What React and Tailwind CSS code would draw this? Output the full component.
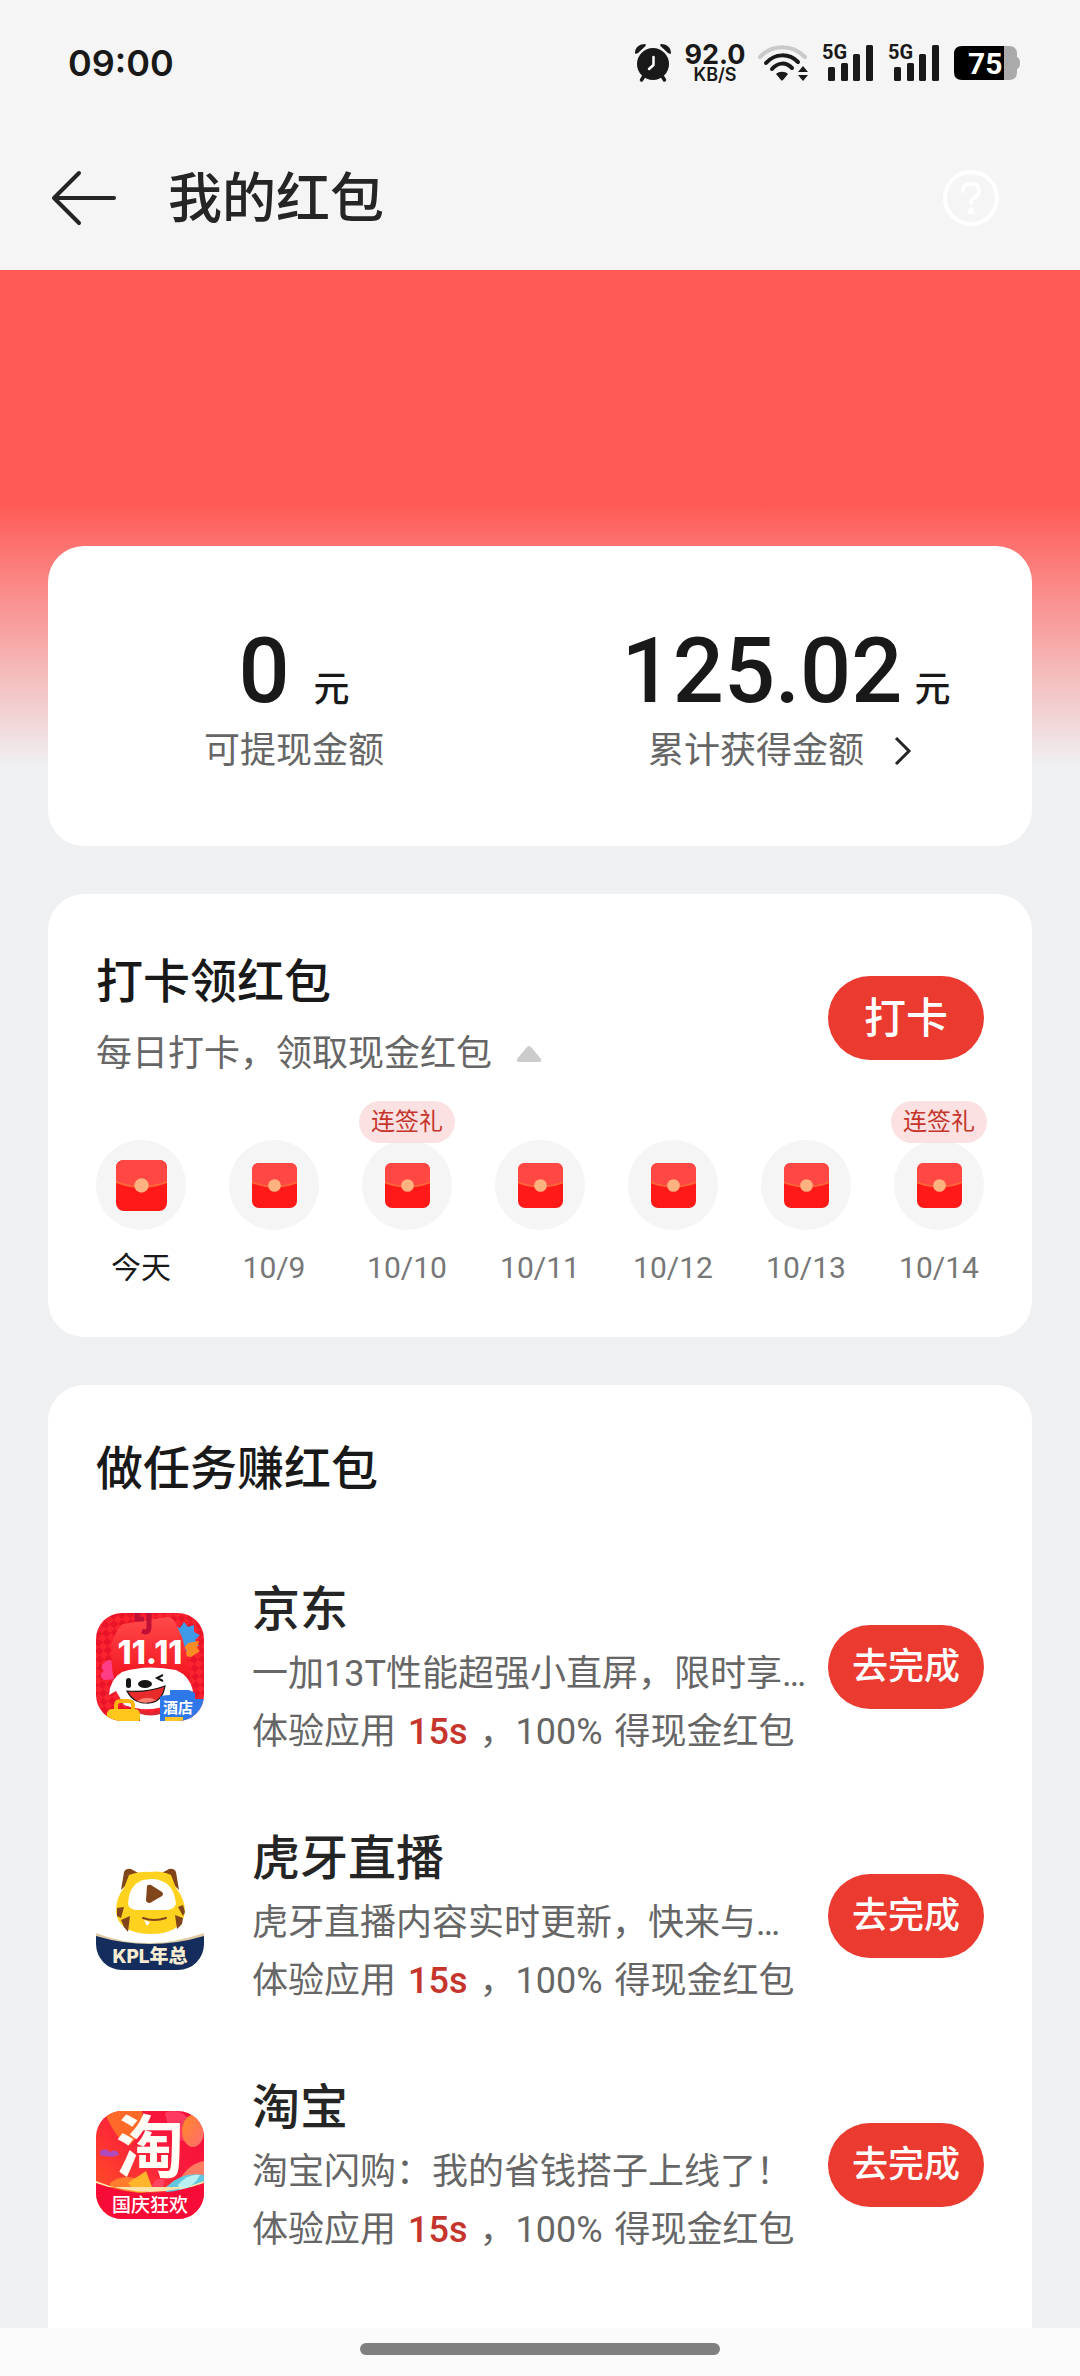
import React from "react";

const DAYS = [
  { label: "今天", today: true },
  { label: "10/9" },
  { label: "10/10", gift: true },
  { label: "10/11" },
  { label: "10/12" },
  { label: "10/13" },
  { label: "10/14", gift: true },
];

const TASKS = [
  { name: "京东", desc: "一加13T性能超强小直屏，限时享…", Icon: JdIcon },
  { name: "虎牙直播", desc: "虎牙直播内容实时更新，快来与…", Icon: HuyaIcon },
  { name: "淘宝", desc: "淘宝闪购：我的省钱搭子上线了！", Icon: TaobaoIcon },
];

function AlarmIcon() {
  return (
    <svg width="38" height="40" viewBox="0 0 38 40" aria-hidden="true">
      <path d="M1 10C1 4 6 1 11 1C12 1 12 3 11 3.500L4 10C3 11 1 11 1 10Z" fill="#191919" />
      <path d="M37 10C37 4 32 1 27 1C26 1 26 3 27 3.500L34 10C35 11 37 11 37 10Z" fill="#191919" />
      <path d="M10 33L7.500 37M28 33L30.500 37" stroke="#191919" strokeWidth="3.500" strokeLinecap="round" />
      <circle cx="19" cy="21" r="16" fill="#191919" />
      <path d="M19.500 14V22L15 26" stroke="#fff" strokeWidth="2.500" fill="none" strokeLinecap="round" strokeLinejoin="round" />
    </svg>
  );
}

function WifiIcon() {
  return (
    <svg width="50" height="38" viewBox="0 0 50 38" fill="none" aria-hidden="true">
      <path d="M2 13C14 0 34 0 47 13" stroke="#c9c9c9" strokeWidth="4" strokeLinecap="round" />
      <path d="M8 19C17 9 31 9 40 18" stroke="#191919" strokeWidth="4" strokeLinecap="round" />
      <path d="M14 25C20 18 28 18 34 24" stroke="#191919" strokeWidth="4" strokeLinecap="round" />
      <path d="M18 30C21 27 27 27 30 30L25 36Q24 37 23 36Z" fill="#191919" />
      <path d="M45 22L50 28H40ZM45 37L50 31H40Z" fill="#191919" />
    </svg>
  );
}

function Signal() {
  return (
    <div className="relative h-[38px] w-[52px]">
      <span className="absolute top-0 left-0 text-xl leading-4 font-bold">5G</span>
      <svg width="52" height="38" viewBox="0 0 52 38" fill="#191919" aria-hidden="true">
        <rect x="6" y="23" width="7" height="14" rx="1.500" />
        <rect x="19" y="19" width="7" height="18" rx="1.500" />
        <rect x="31" y="10" width="7" height="27" rx="1.500" />
        <rect x="44" y="1" width="7" height="36" rx="1.500" />
      </svg>
    </div>
  );
}

function Battery() {
  return (
    <div className="relative h-[34px] w-[66px]">
      <svg width="66" height="34" viewBox="0 0 66 34" aria-hidden="true">
        <path d="M50 0H55Q63 0 63 8V11Q66 12 66 17Q66 22 63 23V26Q63 34 55 34H50Z" fill="#aaa" />
        <path d="M50 0H8Q0 0 0 8V26Q0 34 8 34H50Z" fill="#000" />
      </svg>
      <span className="absolute inset-y-0 left-3.5 text-[30px] leading-9 font-bold text-white">75</span>
    </div>
  );
}

function Envelope({ size }) {
  return (
    <svg width={size} height={size} viewBox="0 0 51 51" aria-hidden="true">
      <rect width="51" height="51" rx="8" fill="#ff1919" />
      <path d="M0 22V8Q0 0 8 0H43Q51 0 51 8V22Q25.500 32 0 22Z" fill="#ff4744" />
      <path d="M0 22Q25.500 32 51 22" stroke="#ff6738" strokeWidth="2" fill="none" />
      <circle cx="25.500" cy="25.500" r="7.200" fill="#ffb27f" />
    </svg>
  );
}

function JdIcon() {
  return (
    <svg className="size-[108px] shrink-0 rounded-[26px]" viewBox="0 0 108 108" role="img" aria-label="京东">
      <defs>
        <pattern id="jd-check" width="12" height="12" patternUnits="userSpaceOnUse" patternTransform="rotate(40)">
          <rect width="12" height="12" fill="#fb2330" />
          <rect width="6" height="6" fill="#e91428" />
          <rect x="6" y="6" width="6" height="6" fill="#e91428" />
        </pattern>
        <linearGradient id="jd-tag" x1="0" y1="0" x2="0" y2="1">
          <stop offset="0" stopColor="#ff4a4a" />
          <stop offset="1" stopColor="#f3141f" />
        </linearGradient>
      </defs>
      <rect width="108" height="108" fill="url(#jd-check)" />
      <path d="M78 12L84 15L88 9L92 14L98 12L98 19L104 22L99 27L103 33L96 34L92 39L86 35L80 36Z" fill="#3d9bea" />
      <path d="M92 30L103 28L101 35L104 38L95 44L88 43L91 37L88 35Z" fill="#ff8b25" />
      <path d="M8 50Q3 54 8 58Q1 62 8 67L22 66L18 48Q12 45 8 50Z" fill="#ff3d86" />
      <path d="M27 11L71 4Q76 4 79 9L86 24Q92 44 94 64L18 66Q14 50 16 29Q22 13 27 11Z" fill="url(#jd-tag)" />
      <path d="M41 0V6H48M53 0V14Q53 21 46 18" fill="none" stroke="#bf1038" strokeWidth="5" />
      <text x="54" y="51" textAnchor="middle" fontSize="32" fontWeight="800" fill="#fff" className="font-[Inter]">11.11</text>
      <path d="M13 82Q14 66 26 59Q50 51 80 57Q94 63 97 78Q92 84 86 77L82 88Q55 102 28 92L20 78Z" fill="#fff" />
      <rect x="30" y="65" width="5" height="10" rx="2.500" fill="#161616" />
      <ellipse cx="49" cy="71" rx="7" ry="4" fill="#161616" />
      <path d="M67 62L61 65L67 68" fill="none" stroke="#161616" strokeWidth="2" />
      <path d="M31 78Q50 80 69 73Q66 91 50 90Q37 90 31 78Z" fill="#e82b2b" stroke="#161616" strokeWidth="1.200" />
      <path d="M41 88Q50 82 60 87Q50 92 41 88Z" fill="#ff7c70" />
      <path d="M20 98V92Q20 88 25 88H32Q37 88 37 92V98" fill="none" stroke="#ffb411" strokeWidth="4" />
      <rect x="11" y="96" width="33" height="14" rx="5" fill="#ffc61c" />
      <path d="M44 100Q56 104 66 98V108H44Z" fill="#fff" />
      <path d="M44 99Q54 103 66 99" fill="none" stroke="#de2633" strokeWidth="3" />
      <path d="M64 84Q66 82 74 82V77H93L99 80V86H108V108H64Z" fill="#2f78ea" />
      <rect x="69" y="104" width="18" height="4" fill="#ffc425" />
      <text x="82" y="100" textAnchor="middle" fontSize="15" fontWeight="700" fill="#fff" className="font-['Noto_Sans_CJK_SC']">酒店</text>
    </svg>
  );
}

function HuyaIcon() {
  return (
    <svg className="size-[108px] shrink-0 rounded-[26px]" viewBox="0 0 108 108" role="img" aria-label="虎牙直播">
      <rect width="108" height="108" fill="#fff" />
      <path d="M25 28L28 10Q30 6 35 7L46 13Q34 18 25 28Z" fill="#81451c" />
      <path d="M83 28L80 10Q78 6 73 7L62 13Q74 18 83 28Z" fill="#81451c" />
      <path d="M28 26L33 13Q45 9 54 10Q65 8 75 13L80 26Q89 37 89 50Q86 72 54 72Q22 71 20 50Q20 35 28 26Z" fill="#ffd21f" />
      <path d="M32 42Q33 17 56 17Q78 18 80 42Q78 48 69 48H43Q33 48 32 42Z" fill="#fff" />
      <path d="M51 24Q52 22 55 23L66 30Q68 32 66 34L54 41Q50 41 50 38Z" fill="#81451c" />
      <path d="M21 46L28 45L25 56L21 54ZM25 58L34 54L32 70L28 65ZM87 43L82 45L87 54L89 50ZM87 56L79 53L81 67L86 62Z" fill="#81451c" />
      <path d="M47 56Q58 60 70 56" fill="none" stroke="#81451c" strokeWidth="2" strokeLinecap="round" />
      <path d="M48 58L54 60L51 64Z" fill="#fff" />
      <path d="M0 71Q50 91 108 71V84H0Z" fill="#dfcca4" />
      <path d="M0 74Q54 90 108 74V108H0Z" fill="#142d5c" />
      <text x="54" y="101" textAnchor="middle" fontSize="19" fontWeight="800" fill="#f7ecd2" className="font-[Inter,'Noto_Sans_CJK_SC']">KPL年总</text>
    </svg>
  );
}

function TaobaoIcon() {
  return (
    <svg className="size-[108px] shrink-0 rounded-[26px]" viewBox="0 0 108 108" role="img" aria-label="淘宝">
      <defs>
        <linearGradient id="tb-bg" x1="0" y1="1" x2="1" y2="0">
          <stop offset="0" stopColor="#ff5a1f" />
          <stop offset="0.600" stopColor="#fb1d3d" />
          <stop offset="1" stopColor="#f20a38" />
        </linearGradient>
        <linearGradient id="tb-balloon" x1="0" y1="0" x2="1" y2="1">
          <stop offset="0" stopColor="#ff8a22" />
          <stop offset="1" stopColor="#ff6b75" />
        </linearGradient>
      </defs>
      <rect width="108" height="108" fill="url(#tb-bg)" />
      <path d="M8 0H46Q50 18 34 34Q20 30 8 0Z" fill="#ff6a29" />
      <path d="M70 6Q66 0 78 0Q94 2 92 14L88 30Q74 28 70 6Z" fill="#ff3a61" />
      <ellipse cx="97" cy="20" rx="11" ry="16" fill="url(#tb-balloon)" />
      <path d="M4 40Q10 36 14 41Q20 37 23 43Q18 48 4 44Z" fill="#b04bbd" />
      <path d="M84 68Q94 52 108 50V70Z" fill="#ff7b62" />
      <path d="M14 72Q30 60 50 72V84H14Z" fill="#ff7d2d" />
      <path d="M70 76Q86 60 108 64V84H70Z" fill="#62c8df" />
      <path d="M82 74Q92 62 104 64Q98 76 84 80Z" fill="#b9f1f2" />
      <text x="54" y="61" textAnchor="middle" fontSize="68" fontWeight="700" fill="#fffdf4" className="font-['Noto_Sans_CJK_SC']">淘</text>
      <path d="M32 72L50 60L56 76L42 84Z" fill="#ffb62c" />
      <path d="M56 76Q58 66 68 68Q70 78 58 80Z" fill="#ff4461" />
      <path d="M0 70Q54 92 108 70V76H0Z" fill="#ffe2a8" />
      <path d="M0 72Q54 92 108 72V108H0Z" fill="#f60c36" />
      <text x="54" y="101" textAnchor="middle" fontSize="19" fontWeight="500" fill="#fff" className="font-['Noto_Sans_CJK_SC']">国庆狂欢</text>
    </svg>
  );
}

function StatusBar() {
  return (
    <div className="flex h-[126px] items-center justify-between pr-[60px] pl-[68px] text-[#191919]">
      <span className="font-[Inter] text-4xl font-semibold">09:00</span>
      <div className="flex items-center gap-3.5">
        <AlarmIcon />
        <div className="flex w-[58px] flex-col items-center font-[Inter]">
          <span className="text-[27px] leading-6 font-bold">92.0</span>
          <span className="text-lg leading-4 font-semibold">KB/S</span>
        </div>
        <WifiIcon />
        <Signal />
        <Signal />
        <Battery />
      </div>
    </div>
  );
}

function PillButton({ children, className }) {
  return (
    <button type="button" className={`h-[84px] w-[156px] shrink-0 rounded-full bg-[#eb3a2f] font-medium text-white ${className}`}>
      {children}
    </button>
  );
}

export default function App() {
  return (
    <div className="flex min-h-screen flex-col bg-[#eff0f2] font-[Roboto,'Noto_Sans_CJK_SC',sans-serif] text-[#191919]">
      <header className="bg-[#f5f5f5]">
        <StatusBar />
        <div className="flex h-[144px] items-center pr-20 pl-12">
          <button type="button" aria-label="返回" className="mr-12">
            <svg width="72" height="60" viewBox="0 0 72 60" fill="none" stroke="#252525" strokeWidth="4" strokeLinecap="round" strokeLinejoin="round">
              <path d="M66 30H6M31 5L6 30L31 55" />
            </svg>
          </button>
          <h1 className="flex-1 pt-1 text-[54px] leading-[72px] font-medium text-[#252525]">我的红包</h1>
          <button type="button" aria-label="帮助">
            <svg width="58" height="58" viewBox="0 0 58 58" fill="none" stroke="#fff" strokeWidth="4" strokeLinecap="round">
              <circle cx="29" cy="29" r="26" />
              <path d="M21 22Q21 15 29 15Q37 15 37 22Q37 26 32 29Q29 31 29 34" />
              <circle cx="29" cy="42" r="1.500" />
            </svg>
          </button>
        </div>
      </header>

      <main className="flex flex-1 flex-col gap-12 bg-[linear-gradient(#ff5a56_235px,#eff0f2_495px)] px-12 pt-[276px]">
        <section className="grid grid-cols-2 rounded-[36px] bg-white pt-[78px] pb-[68px] text-center">
          <div>
            <p className="flex items-baseline justify-center gap-6 font-medium">
              <span className="text-[90px] leading-[96px]">0</span>
              <span className="text-4xl">元</span>
            </p>
            <p className="mt-1 text-4xl leading-[54px] text-[#666]">可提现金额</p>
          </div>
          <div>
            <p className="flex items-baseline justify-center gap-3 font-medium">
              <span className="text-[90px] leading-[96px]">125.02</span>
              <span className="text-4xl">元</span>
            </p>
            <a href="#records" className="mt-1 flex items-center justify-center gap-6 text-4xl leading-[54px] text-[#666]">
              累计获得金额
              <svg width="36" height="32" viewBox="0 0 36 32" fill="none" stroke="#252525" strokeWidth="3" aria-hidden="true">
                <path d="M8 3L21 16L8 29" />
              </svg>
            </a>
          </div>
        </section>

        <section className="rounded-[36px] bg-white px-12 pt-16 pb-[49px]">
          <div className="flex items-center justify-between">
            <div>
              <h2 className="text-[47px] leading-[48px] font-medium">打卡领红包</h2>
              <p className="mt-6 flex items-center gap-6 text-4xl leading-[48px] text-[#666]">
                每日打卡，领取现金红包
                <svg width="26" height="18" viewBox="0 0 26 18" aria-hidden="true">
                  <path d="M11 2Q13 0 15 2L25 14Q26 17 23 17H3Q0 17 1 14Z" fill="#ccc" />
                </svg>
              </p>
            </div>
            <PillButton className="text-[42px]">打卡</PillButton>
          </div>
          <ul className="mt-[62px] flex justify-between">
            {DAYS.map((day) => (
              <li key={day.label} className="relative flex w-[90px] flex-col items-center">
                {day.gift && (
                  <span className="absolute -top-[39px] rounded-full bg-[#fbe1e1] px-3 text-2xl leading-[42px] whitespace-nowrap text-[#c5352c]">
                    连签礼
                  </span>
                )}
                <span className="flex size-[90px] items-center justify-center rounded-full bg-[#f5f5f5]">
                  <Envelope size={day.today ? 51 : 45} />
                </span>
                <span className={`mt-[18px] text-3xl leading-10 ${day.today ? "" : "text-[#777]"}`}>{day.label}</span>
              </li>
            ))}
          </ul>
        </section>

        <section className="flex-1 rounded-t-[36px] bg-white px-12 pt-[60px]">
          <h2 className="text-[47px] leading-[48px] font-medium">做任务赚红包</h2>
          <ul className="mt-[85px] flex flex-col gap-[71px]">
            {TASKS.map(({ name, desc, Icon }) => (
              <li key={name} className="flex items-center">
                <Icon />
                <div className="mr-2 ml-12 min-w-0 flex-1 pt-2">
                  <h3 className="text-5xl leading-[48px] font-medium text-[#252525]">{name}</h3>
                  <p className="mt-4 truncate text-4xl leading-[48px] text-[#666]">{desc}</p>
                  <p className="mt-2.5 text-4xl leading-[48px] text-[#666]">
                    体验应用<span className="mx-3 font-medium text-[#c5352c]">15s</span>，100%
                    <span className="ml-3">得现金红包</span>
                  </p>
                </div>
                <PillButton className="text-4xl">去完成</PillButton>
              </li>
            ))}
          </ul>
        </section>
      </main>

      <footer className="flex h-12 shrink-0 justify-center bg-[#fbfbfb] pt-[15px]">
        <div className="h-3 w-1/3 rounded-full bg-[#7f7f7f]" />
      </footer>
    </div>
  );
}
